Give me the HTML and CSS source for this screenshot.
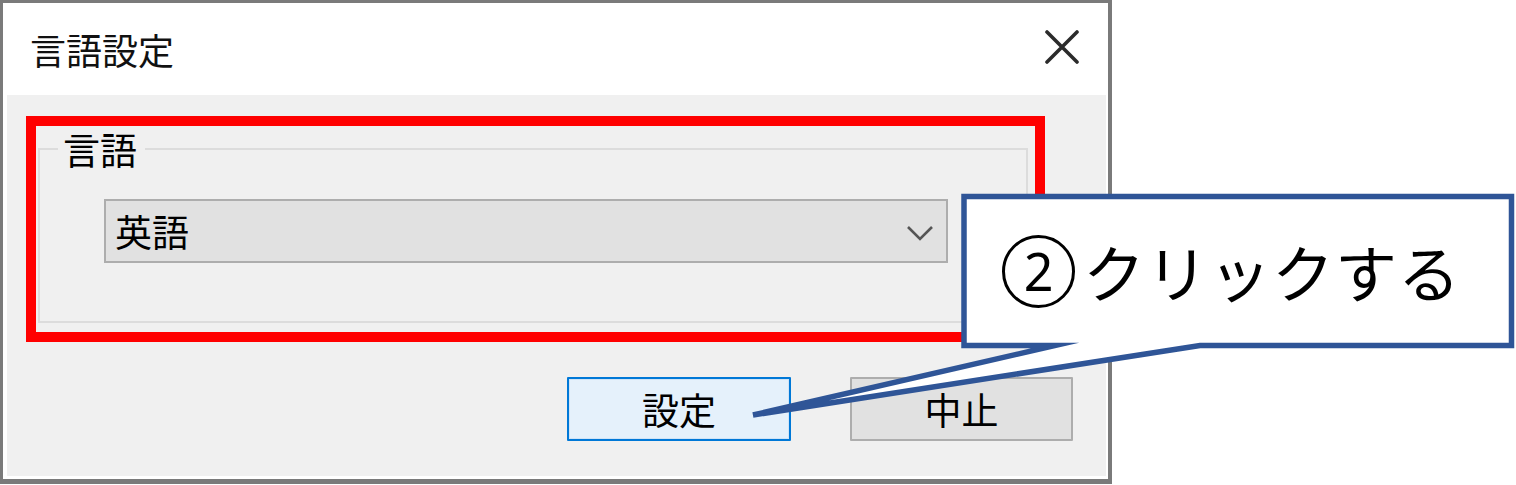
FILE: index.html
```html
<!DOCTYPE html>
<html lang="ja">
<head>
<meta charset="utf-8">
<title>言語設定</title>
<link rel="stylesheet" href="styles.css">
</head>
<body>
<div class="page">
  <div class="dialog">
    <div class="titlebar">
      <span class="title">言語設定</span>
      <svg class="close" width="34" height="34" viewBox="0 0 34 34" aria-hidden="true">
        <path d="M2 2 L32 32 M32 2 L2 32" stroke="#2b2b2b" stroke-width="3.6" stroke-linecap="round" fill="none"/>
      </svg>
    </div>
    <div class="content">
      <div class="highlight">
        <fieldset class="group">
          <legend class="group-label">言語</legend>
          <div class="combo">
            <span class="combo-value">英語</span>
            <svg class="chevron" width="28" height="16" viewBox="0 0 28 16" aria-hidden="true">
              <polyline points="2,2 14,14 26,2" fill="none" stroke="#555" stroke-width="2.6"/>
            </svg>
          </div>
        </fieldset>
      </div>
      <div class="buttons">
        <button class="btn btn-primary">設定</button>
        <button class="btn">中止</button>
      </div>
    </div>
  </div>

  <svg class="callout-shape" width="1516" height="485" viewBox="0 0 1516 485" aria-hidden="true">
    <path d="M964 196.5 L1511.5 196.5 L1511.5 345.5 L1200 345.5 L753 415 L1055 345.5 L964 345.5 Z"
          fill="#fff" stroke="#2f5597" stroke-width="5.5" stroke-linejoin="miter" stroke-miterlimit="10"/>
  </svg>
  <div class="callout-text"><span class="circled">2</span><span class="callout-words">クリックする</span></div>
</div>
</body>
</html>
```

FILE: styles.css
```css
html, body {
  margin: 0;
  padding: 0;
  background: #ffffff;
}

body {
  font-family: "Noto Sans CJK JP", "Noto Sans", sans-serif;
  color: #000;
}

.page {
  position: relative;
  width: 1516px;
  height: 485px;
  overflow: hidden;
  background: #ffffff;
}

.dialog {
  box-sizing: border-box;
  width: 1112px;
  height: 484px;
  border-style: solid;
  border-color: #7a7a7a;
  border-width: 3px 4px 5px 3px;
  padding: 0 2px 3px 4px;
  background: #ffffff;
  display: flex;
  flex-direction: column;
}

.titlebar {
  height: 92px;
  flex: none;
  display: flex;
  align-items: center;
  justify-content: space-between;
  padding: 0 27px 0 23px;
  background: #ffffff;
}

.title {
  font-size: 36px;
  line-height: 1;
  color: #111;
}

.close {
  display: block;
  margin-top: -4px;
}

.content {
  flex: 1;
  background: #f0f0f0;
  display: flex;
  flex-direction: column;
  padding-top: 21px;
}

.highlight {
  margin: 0 61px 0 19px;
  border: 10px solid #ff0000;
  padding: 1px 7px 9px 2px;
}

.group {
  margin: 0;
  min-width: 0;
  border: 2px solid #dcdcdc;
  padding: 0 0 58px 0;
}

.group-label {
  font-size: 37px;
  line-height: 44px;
  padding: 0 8px 0 5px;
  margin-left: 18px;
  color: #000;
}

.combo {
  box-sizing: border-box;
  height: 64px;
  margin: 28px 78px 0 64px;
  border: 2px solid #adadad;
  background: #e1e1e1;
  display: flex;
  align-items: center;
  justify-content: space-between;
  padding: 0 12px 0 9px;
}

.combo-value {
  font-size: 37px;
  line-height: 1;
}

.chevron {
  display: block;
  margin-top: 4px;
}

.buttons {
  display: flex;
  justify-content: flex-end;
  gap: 59px;
  margin-top: 35px;
  padding-right: 33px;
}

.btn {
  box-sizing: border-box;
  width: 223px;
  height: 64px;
  padding: 0;
  border: 2px solid #adadad;
  border-radius: 1px;
  background: #e1e1e1;
  font-family: "Noto Sans CJK JP", "Noto Sans", sans-serif;
  font-size: 37px;
  line-height: 1;
  color: #000;
}

.btn-primary {
  width: 224px;
  border-color: #0078d7;
  background: #e5f1fb;
  box-shadow: inset 0 0 0 1px #cfe4f7;
}

.callout-shape {
  position: absolute;
  left: 0;
  top: 0;
  pointer-events: none;
}

.callout-text {
  position: absolute;
  left: 961px;
  top: 194px;
  width: 553px;
  height: 154px;
  box-sizing: border-box;
  display: flex;
  align-items: center;
  padding-left: 41px;
  color: #000;
  white-space: nowrap;
}

.circled {
  box-sizing: border-box;
  width: 73px;
  height: 73px;
  border: 3px solid #000;
  border-radius: 50%;
  display: flex;
  align-items: center;
  justify-content: center;
  font-family: "Noto Sans", sans-serif;
  font-size: 52px;
  line-height: 1;
  margin-right: 8px;
}

.callout-words {
  font-size: 62px;
  line-height: 1;
  letter-spacing: 1px;
}
```
